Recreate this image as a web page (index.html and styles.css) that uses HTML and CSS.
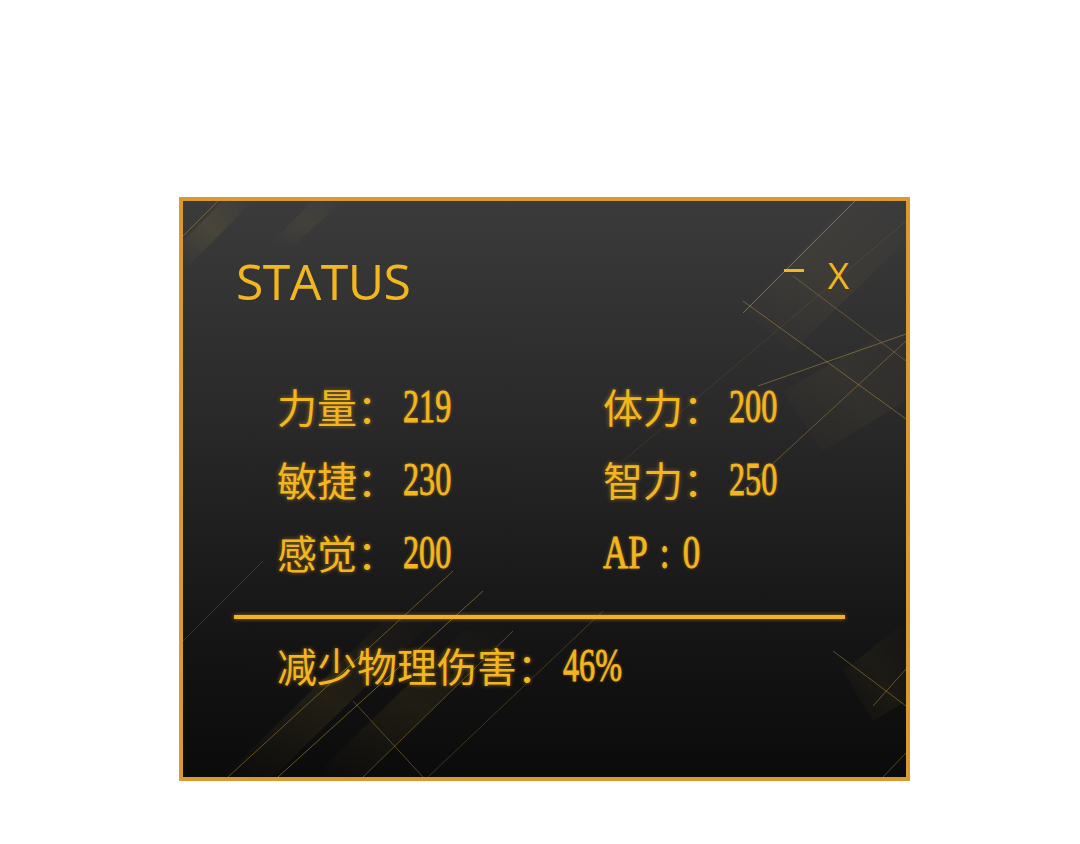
FILE: index.html
```html
<!DOCTYPE html>
<html lang="zh-CN">
<head>
<meta charset="utf-8">
<title>STATUS</title>
<link rel="stylesheet" href="styles.css">
</head>
<body>
<div class="page">
  <section class="panel">
    <svg class="panel-art" viewBox="0 0 723 576" preserveAspectRatio="none" aria-hidden="true">
      <defs>
        <linearGradient id="band" x1="0" y1="1" x2="1" y2="0">
          <stop offset="0" stop-color="#c9a23a" stop-opacity="0"/>
          <stop offset="0.5" stop-color="#c9a23a" stop-opacity="0.12"/>
          <stop offset="1" stop-color="#c9a23a" stop-opacity="0"/>
        </linearGradient>
      </defs>
      <!-- soft diagonal bands -->
      <polygon points="0,40 40,0 70,0 0,70" fill="url(#band)"/>
      <polygon points="90,40 130,0 160,0 110,45" fill="url(#band)" opacity="0.6"/>
      <polygon points="560,110 668,0 723,0 723,40 610,150" fill="url(#band)" opacity="0.5"/>
      <polygon points="600,190 723,120 723,200 640,250" fill="url(#band)" opacity="0.45"/>
      <polygon points="40,576 200,420 250,420 90,576" fill="url(#band)" opacity="0.8"/>
      <polygon points="130,576 280,430 330,430 180,576" fill="url(#band)" opacity="0.7"/>
      <polygon points="660,470 723,420 723,500 690,520" fill="url(#band)" opacity="0.5"/>
      <!-- thin gold strokes -->
      <g stroke="#d8b040" fill="none" stroke-width="1">
        <line x1="0" y1="35" x2="35" y2="0" opacity="0.35"/>
        <line x1="672" y1="0" x2="560" y2="112" opacity="0.45"/>
        <line x1="560" y1="100" x2="723" y2="218" opacity="0.4"/>
        <line x1="575" y1="185" x2="723" y2="133" opacity="0.4"/>
        <line x1="560" y1="290" x2="723" y2="140" opacity="0.35"/>
        <line x1="610" y1="75" x2="723" y2="160" opacity="0.3"/>
        <line x1="440" y1="260" x2="723" y2="20" opacity="0.12"/>
        <line x1="650" y1="450" x2="723" y2="505" opacity="0.4"/>
        <line x1="690" y1="505" x2="723" y2="468" opacity="0.4"/>
        <line x1="700" y1="576" x2="723" y2="552" opacity="0.35"/>
        <line x1="45" y1="576" x2="270" y2="370" opacity="0.4"/>
        <line x1="95" y1="576" x2="300" y2="390" opacity="0.45"/>
        <line x1="180" y1="576" x2="330" y2="430" opacity="0.35"/>
        <line x1="245" y1="576" x2="420" y2="410" opacity="0.25"/>
        <line x1="170" y1="500" x2="240" y2="576" opacity="0.35"/>
        <line x1="0" y1="440" x2="80" y2="360" opacity="0.2"/>
      </g>
    </svg>

    <header class="panel-head">
      <h1 class="title">STATUS</h1>
      <div class="controls">
        <span class="ctl-min"></span>
        <span class="ctl-close">X</span>
      </div>
    </header>

    <div class="stats">
      <div class="stat"><span class="label">力量：</span><span class="num">219</span></div>
      <div class="stat"><span class="label">体力：</span><span class="num">200</span></div>
      <div class="stat"><span class="label">敏捷：</span><span class="num">230</span></div>
      <div class="stat"><span class="label">智力：</span><span class="num">250</span></div>
      <div class="stat"><span class="label">感觉：</span><span class="num">200</span></div>
      <div class="stat"><span class="num ap">AP : 0</span></div>
    </div>

    <hr class="divider">

    <div class="stat extra"><span class="label">减少物理伤害：</span><span class="num">46%</span></div>
  </section>
</div>
</body>
</html>
```

FILE: styles.css
```css
html, body {
  margin: 0;
  padding: 0;
  background: #ffffff;
}

.page {
  width: 1080px;
  height: 844px;
  padding: 197px 0 0 179px;
  box-sizing: border-box;
}

.panel {
  position: relative;
  width: 731px;
  height: 584px;
  box-sizing: border-box;
  border: 4px solid #d99a33;
  background: linear-gradient(180deg, #3b3b3c 0%, #282829 40%, #151515 75%, #0b0b0b 100%);
  padding: 45px 57px 0 53px;
  overflow: hidden;
  color: #f2b61e;
}

.panel-art {
  position: absolute;
  left: 0;
  top: 0;
  width: 100%;
  height: 100%;
  pointer-events: none;
}

.panel-head {
  position: relative;
  display: flex;
  justify-content: space-between;
  align-items: flex-start;
}

.title {
  margin: 0;
  font-family: "Open Sans", "Noto Sans", sans-serif;
  font-weight: 400;
  font-size: 50px;
  line-height: 70px;
  letter-spacing: -0.6px;
  color: #f2b61e;
}

.controls {
  display: flex;
  align-items: center;
  gap: 24px;
  padding-top: 9px;
}

.ctl-min {
  display: block;
  width: 20px;
  height: 3px;
  background: #f2b61e;
  margin-top: -10px;
}

.ctl-close {
  font-family: "Open Sans", "Noto Sans", sans-serif;
  font-size: 37px;
  line-height: 40px;
  color: #f2b61e;
}

.stats {
  position: relative;
  display: grid;
  grid-template-columns: 326px auto;
  row-gap: 30px;
  margin: 69px 0 0 41px;
}

.stat {
  display: flex;
  align-items: center;
  height: 43px;
  white-space: nowrap;
  text-shadow: 0 0 4px rgba(255, 170, 20, 0.55);
}

.label {
  font-family: "Noto Sans CJK SC", "Noto Sans CJK JP", sans-serif;
  font-size: 40px;
  line-height: 43px;
  margin-right: 6px;
}

.num {
  display: inline-block;
  font-family: "Liberation Serif", "DejaVu Serif", serif;
  font-weight: 400;
  font-size: 46px;
  line-height: 43px;
  -webkit-text-stroke: 0.8px #f2b61e;
  transform: scaleX(0.7);
  transform-origin: left center;
}

.ap {
  word-spacing: 6px;
  transform: scaleX(0.76);
}

.divider {
  position: relative;
  margin: 41px 4px 0 -2px;
  border: 0;
  height: 4px;
  background: #f0b21e;
  box-shadow: 0 0 4px rgba(255, 170, 20, 0.6);
}

.extra {
  position: relative;
  margin: 25px 0 0 41px;
}
```
